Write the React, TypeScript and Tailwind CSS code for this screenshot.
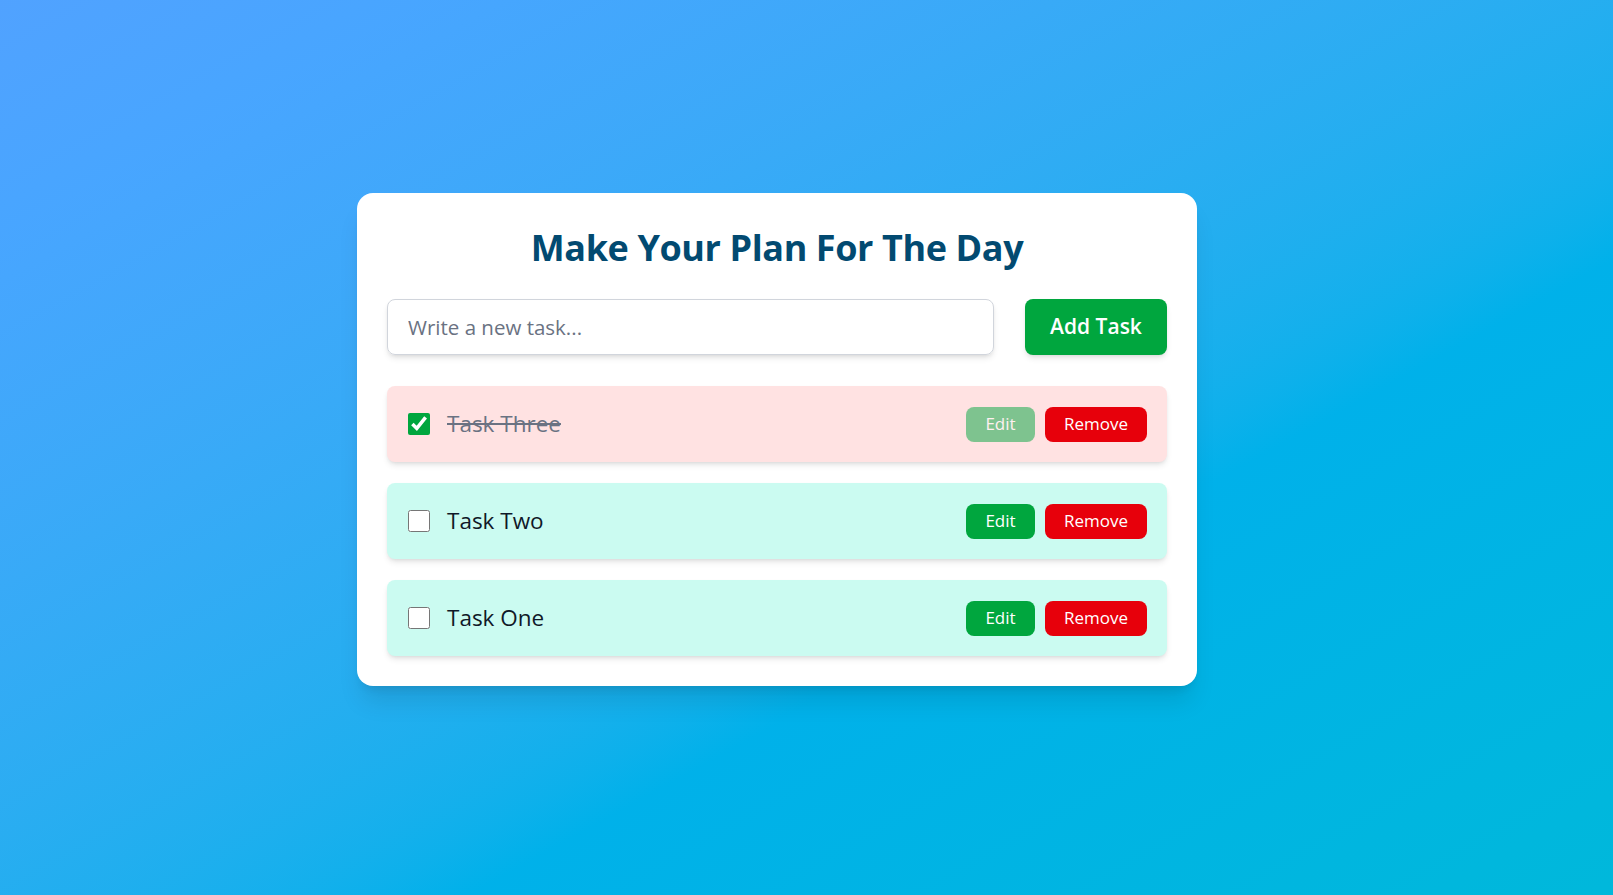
import { useState } from "react";

type Task = { id: number; text: string; done: boolean };

const App: React.FC = () => {
  const [tasks, setTasks] = useState<Task[]>([
    { id: 3, text: "Task Three", done: true },
    { id: 2, text: "Task Two", done: false },
    { id: 1, text: "Task One", done: false },
  ]);
  const [draft, setDraft] = useState("");

  const toggle = (id: number) =>
    setTasks(tasks.map((t) => (t.id === id ? { ...t, done: !t.done } : t)));

  return (
    <div className="min-h-screen w-full bg-linear-to-br from-blue-400 to-cyan-500 flex items-center justify-center pr-[59px] pb-[16px] font-['Segoe_UI','Open_Sans',sans-serif]">
      {/* card */}
      <div className="w-[840px] bg-white rounded-2xl shadow-xl p-[30px]">
        {/* header */}
        <h1 className="text-center text-[36px] leading-[50px] tracking-[-0.4px] font-bold text-sky-900 mb-[26px]">
          Make Your Plan For The Day
        </h1>
        {/* new task */}
        <div className="flex gap-[31px]">
          <input
            value={draft}
            onChange={(e) => setDraft(e.target.value)}
            placeholder="Write a new task..."
            className="flex-1 h-14 px-5 text-[20.5px] border border-gray-300 rounded-lg shadow-md outline-none placeholder:text-gray-500 text-gray-800"
          />
          <button className="w-[142px] h-14 rounded-lg bg-green-600 text-white text-[21px] font-semibold shadow-md">
            Add Task
          </button>
        </div>
        {/* task list */}
        <div className="flex flex-col gap-[21px] mt-[31px]">
          {tasks.map((t) => (
            <div
              key={t.id}
              className={`flex items-center justify-between h-[76px] pl-5 pr-5 rounded-lg shadow-md ${
                t.done ? "bg-red-100" : "bg-teal-100"
              }`}
            >
              <div className="flex items-center gap-[17px]">
                <input
                  type="checkbox"
                  checked={t.done}
                  onChange={() => toggle(t.id)}
                  className="w-[22px] h-[22px] m-0 ml-px accent-green-600"
                />
                <span
                  className={`text-[22.5px] ${
                    t.done ? "line-through text-gray-500" : "text-gray-900"
                  }`}
                >
                  {t.text}
                </span>
              </div>
              <div className="flex items-center gap-[10px]">
                <button
                  className={`w-[69px] h-[35px] rounded-lg bg-green-600 text-white text-[17px] ${
                    t.done ? "opacity-50" : ""
                  }`}
                >
                  Edit
                </button>
                <button className="w-[102px] h-[35px] rounded-lg bg-red-600 text-white text-[17px]">
                  Remove
                </button>
              </div>
            </div>
          ))}
        </div>
      </div>
    </div>
  );
};

export default App;
